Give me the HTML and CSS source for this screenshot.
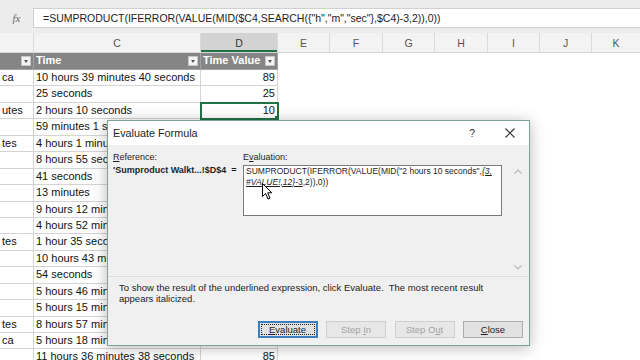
FILE: index.html
```html
<!DOCTYPE html>
<html>
<head>
<meta charset="utf-8">
<link rel="stylesheet" href="styles.css">
</head>
<body>
<div class="app">
  <div class="topbar">
    <div class="fx">fx</div>
    <div class="formula">=SUMPRODUCT(IFERROR(VALUE(MID($C4,SEARCH({"h","m","sec"},$C4)-3,2)),0))</div>
  </div>
  <div class="cols">
    <div class="ch"></div><div class="ch">C</div><div class="ch ch-sel">D</div><div class="ch">E</div><div class="ch">F</div><div class="ch">G</div><div class="ch">H</div><div class="ch">I</div><div class="ch">J</div><div class="ch last">K</div>
  </div>
  <div class="sheet">
    <div class="row thead"><div class="c"><span class="dd"></span></div><div class="c">Time<span class="dd"></span></div><div class="c">Time Value<span class="dd"></span></div><div></div></div>
    <div class="row"><div class="c">ca</div><div class="c">10 hours 39 minutes 40 seconds</div><div class="c num">89</div><div></div></div>
    <div class="row"><div class="c"></div><div class="c">25 seconds</div><div class="c num">25</div><div></div></div>
    <div class="row"><div class="c">utes</div><div class="c">2 hours 10 seconds</div><div class="c num sel">10</div><div></div></div>
    <div class="row"><div class="c"></div><div class="c">59 minutes 1 s</div><div class="c num"></div><div></div></div>
    <div class="row"><div class="c">tes</div><div class="c">4 hours 1 minute</div><div class="c num"></div><div></div></div>
    <div class="row"><div class="c"></div><div class="c">8 hours 55 sec</div><div class="c num"></div><div></div></div>
    <div class="row"><div class="c"></div><div class="c">41 seconds</div><div class="c num"></div><div></div></div>
    <div class="row"><div class="c"></div><div class="c">13 minutes</div><div class="c num"></div><div></div></div>
    <div class="row"><div class="c"></div><div class="c">9 hours 12 min</div><div class="c num"></div><div></div></div>
    <div class="row"><div class="c"></div><div class="c">4 hours 52 min</div><div class="c num"></div><div></div></div>
    <div class="row"><div class="c">tes</div><div class="c">1 hour 35 seco</div><div class="c num"></div><div></div></div>
    <div class="row"><div class="c"></div><div class="c">10 hours 43 m</div><div class="c num"></div><div></div></div>
    <div class="row"><div class="c"></div><div class="c">54 seconds</div><div class="c num"></div><div></div></div>
    <div class="row"><div class="c"></div><div class="c">5 hours 46 min</div><div class="c num"></div><div></div></div>
    <div class="row"><div class="c"></div><div class="c">5 hours 15 min</div><div class="c num"></div><div></div></div>
    <div class="row"><div class="c">tes</div><div class="c">8 hours 57 min</div><div class="c num"></div><div></div></div>
    <div class="row"><div class="c">ca</div><div class="c">5 hours 18 min</div><div class="c num"></div><div></div></div>
    <div class="row"><div class="c"></div><div class="c">11 hours 36 minutes 38 seconds</div><div class="c num">85</div><div></div></div>
  </div>

  <div class="dialog">
    <div class="dlg-title">
      <span class="dlg-name">Evaluate Formula</span>
      <span class="dlg-help">?</span>
      <svg class="dlg-close" width="10" height="10" viewBox="0 0 10 10"><path d="M0.5 0.5 L9.5 9.5 M9.5 0.5 L0.5 9.5" stroke="#333" stroke-width="1.1" fill="none"/></svg>
    </div>
    <div class="dlg-body">
      <div class="lbl"><span><u>R</u>eference:</span></div>
      <div class="lbl"><span>E<u>v</u>aluation:</span></div>
      <div class="scroll">
        <svg width="8" height="5" viewBox="0 0 8 5"><path d="M0.5 4.5 L4 1 L7.5 4.5" stroke="#b8b8b8" stroke-width="1.2" fill="none"/></svg>
        <svg width="8" height="5" viewBox="0 0 8 5"><path d="M0.5 0.5 L4 4 L7.5 0.5" stroke="#b8b8b8" stroke-width="1.2" fill="none"/></svg>
      </div>
      <div class="refval">'Sumproduct Walkt...!$D$4&nbsp; =</div>
      <div class="evalbox">SUMPRODUCT(IFERROR(VALUE(MID("2 hours 10 seconds",<span class="hl"><i>{3,</i></span><br><span class="hl"><i>#VALUE!,12}</i>-3</span>,2)),0))</div>
    </div>
    <div class="dlg-msg">
      <div>To show the result of the underlined expression, click Evaluate.&nbsp; The most recent result</div>
      <div>appears italicized.</div>
    </div>
    <div class="dlg-btns">
      <button class="btn focus"><span class="focusring"><span><u>E</u>valuate</span></span></button>
      <button class="btn disabled"><span>Step <u>I</u>n</span></button>
      <button class="btn disabled"><span>Step O<u>u</u>t</span></button>
      <button class="btn"><span><u>C</u>lose</span></button>
    </div>
  </div>

  <svg class="cursor" width="11" height="17" viewBox="0 0 11 17"><path d="M0.5 0.5 L0.5 13.5 L3.6 10.6 L6 16 L8 15.1 L5.7 9.8 L9.8 9.8 Z" fill="#fff" stroke="#000" stroke-width="1"/></svg>
</div>
</body>
</html>
```
FILE: styles.css
```css
body {
  margin: 0;
  font-family: "Liberation Sans", Arial, sans-serif;
}
.app {
  position: relative;
  width: 640px;
  height: 360px;
  overflow: hidden;
  background: #fff;
}
.topbar {
  height: 33px;
  box-sizing: border-box;
  padding-top: 8px;
  background: #ececec;
  display: flex;
  align-items: flex-start;
}
.fx {
  width: 33px;
  height: 20px;
  display: flex;
  align-items: center;
  justify-content: center;
  font-family: "Liberation Serif", serif;
  font-style: italic;
  font-size: 11px;
  color: #666;
}
.formula {
  flex: 1;
  height: 20px;
  box-sizing: border-box;
  border: 1px solid #d0d0d0;
  border-right: none;
  background: #fff;
  font-size: 10.5px;
  line-height: 18px;
  padding-left: 9px;
  color: #222;
  white-space: nowrap;
}
.cols {
  height: 20px;
  box-sizing: border-box;
  background: #f3f3f3;
  border-bottom: 1px solid #d6d6d6;
  display: grid;
  grid-template-columns: 34px 167px 77px 52px 53px 52px 53px 52px 52px 1fr;
}
.ch {
  border-right: 1px solid #dadada;
  display: flex;
  align-items: center;
  justify-content: center;
  font-size: 10.5px;
  color: #555;
}
.ch.last { border-right: none; }
.ch-sel {
  background: #d3d3d3;
  color: #333;
  box-shadow: inset 0 -2px 0 #217346;
}
.row {
  display: grid;
  grid-template-columns: 34px 167px 77px 1fr;
  height: 16.45px;
}
.row.thead { height: 17px; }
.c {
  box-sizing: border-box;
  border-right: 1px solid #d4d4d4;
  border-bottom: 1px solid #d4d4d4;
  font-size: 11px;
  line-height: 15.5px;
  padding: 0 2px;
  white-space: nowrap;
  overflow: hidden;
  color: #111;
}
.num { text-align: right; }
.thead .c {
  background: #858585;
  color: #fff;
  font-weight: bold;
  display: flex;
  align-items: center;
  border-color: #a3a3a3;
}
.dd {
  margin-left: auto;
  width: 10px;
  height: 10px;
  box-sizing: border-box;
  background: #f4f4f4;
  border: 1px solid #c4c4c4;
  display: flex;
  align-items: center;
  justify-content: center;
}
.dd::after {
  content: "";
  border-left: 2.5px solid transparent;
  border-right: 2.5px solid transparent;
  border-top: 3px solid #555;
}
.sel {
  position: relative;
  outline: 2px solid #217346;
  outline-offset: -1px;
}
.sel::after {
  content: "";
  position: absolute;
  right: -3px;
  bottom: -3px;
  width: 4px;
  height: 4px;
  background: #217346;
  border: 1px solid #fff;
}
.dialog {
  position: absolute;
  left: 107px;
  top: 120px;
  width: 423px;
  height: 226px;
  box-sizing: border-box;
  border: 1px solid #7ba592;
  background: #f0f0f0;
  box-shadow: 0 2px 14px rgba(0, 0, 0, 0.28);
  display: flex;
  flex-direction: column;
  color: #1e1e1e;
}
.dlg-title {
  height: 24px;
  flex: none;
  background: #fff;
  display: flex;
  align-items: center;
  padding: 0 14px 0 5px;
}
.dlg-name {
  flex: 1;
  font-size: 10.8px;
}
.dlg-help {
  font-size: 10.5px;
  color: #333;
  margin-right: 30px;
}
.dlg-body {
  height: 131px;
  flex: none;
  box-sizing: border-box;
  padding-left: 5px;
  display: grid;
  grid-template-columns: 130px 259px 1fr;
  grid-template-rows: 20px 111px;
}
.lbl {
  font-size: 9px;
  line-height: 12px;
  padding-top: 6px;
}
.scroll {
  grid-column: 3;
  grid-row: 1 / 3;
  display: flex;
  flex-direction: column;
  justify-content: space-between;
  align-items: center;
  padding: 24px 0 6px 4px;
}
.refval {
  grid-column: 1;
  grid-row: 2;
  font-size: 9px;
  font-weight: bold;
  line-height: 11px;
  white-space: nowrap;
}
.evalbox {
  grid-column: 2;
  grid-row: 2;
  align-self: start;
  height: 51px;
  box-sizing: border-box;
  border: 1px solid #7a7a7a;
  background: #fff;
  font-size: 8.5px;
  line-height: 10.5px;
  padding: 0 2px;
  white-space: nowrap;
  overflow: hidden;
}
.hl { text-decoration: underline; }
.dlg-msg {
  border-top: 1px solid #dcdcdc;
  padding: 5px 0 0 11px;
  font-size: 9.5px;
  line-height: 11px;
  color: #222;
  white-space: nowrap;
}
.dlg-btns {
  display: flex;
  justify-content: flex-end;
  gap: 8.5px;
  padding-right: 6px;
  margin-top: 17px;
}
.btn {
  width: 60px;
  height: 17px;
  box-sizing: border-box;
  border: 1px solid #adadad;
  background: #e1e1e1;
  font-family: "Liberation Sans", Arial, sans-serif;
  font-size: 9.5px;
  color: #1e1e1e;
  padding: 0;
  display: flex;
  align-items: center;
  justify-content: center;
}
.btn.focus {
  border: 2px solid #3c7fc0;
  padding: 1px;
}
.focusring {
  flex: 1;
  align-self: stretch;
  border: 1px dotted #222;
  display: flex;
  align-items: center;
  justify-content: center;
}
.btn.disabled {
  color: #a2a2a2;
  border-color: #cfcfcf;
  background: #e7e7e7;
}
.cursor {
  position: absolute;
  left: 262px;
  top: 183px;
}
```
